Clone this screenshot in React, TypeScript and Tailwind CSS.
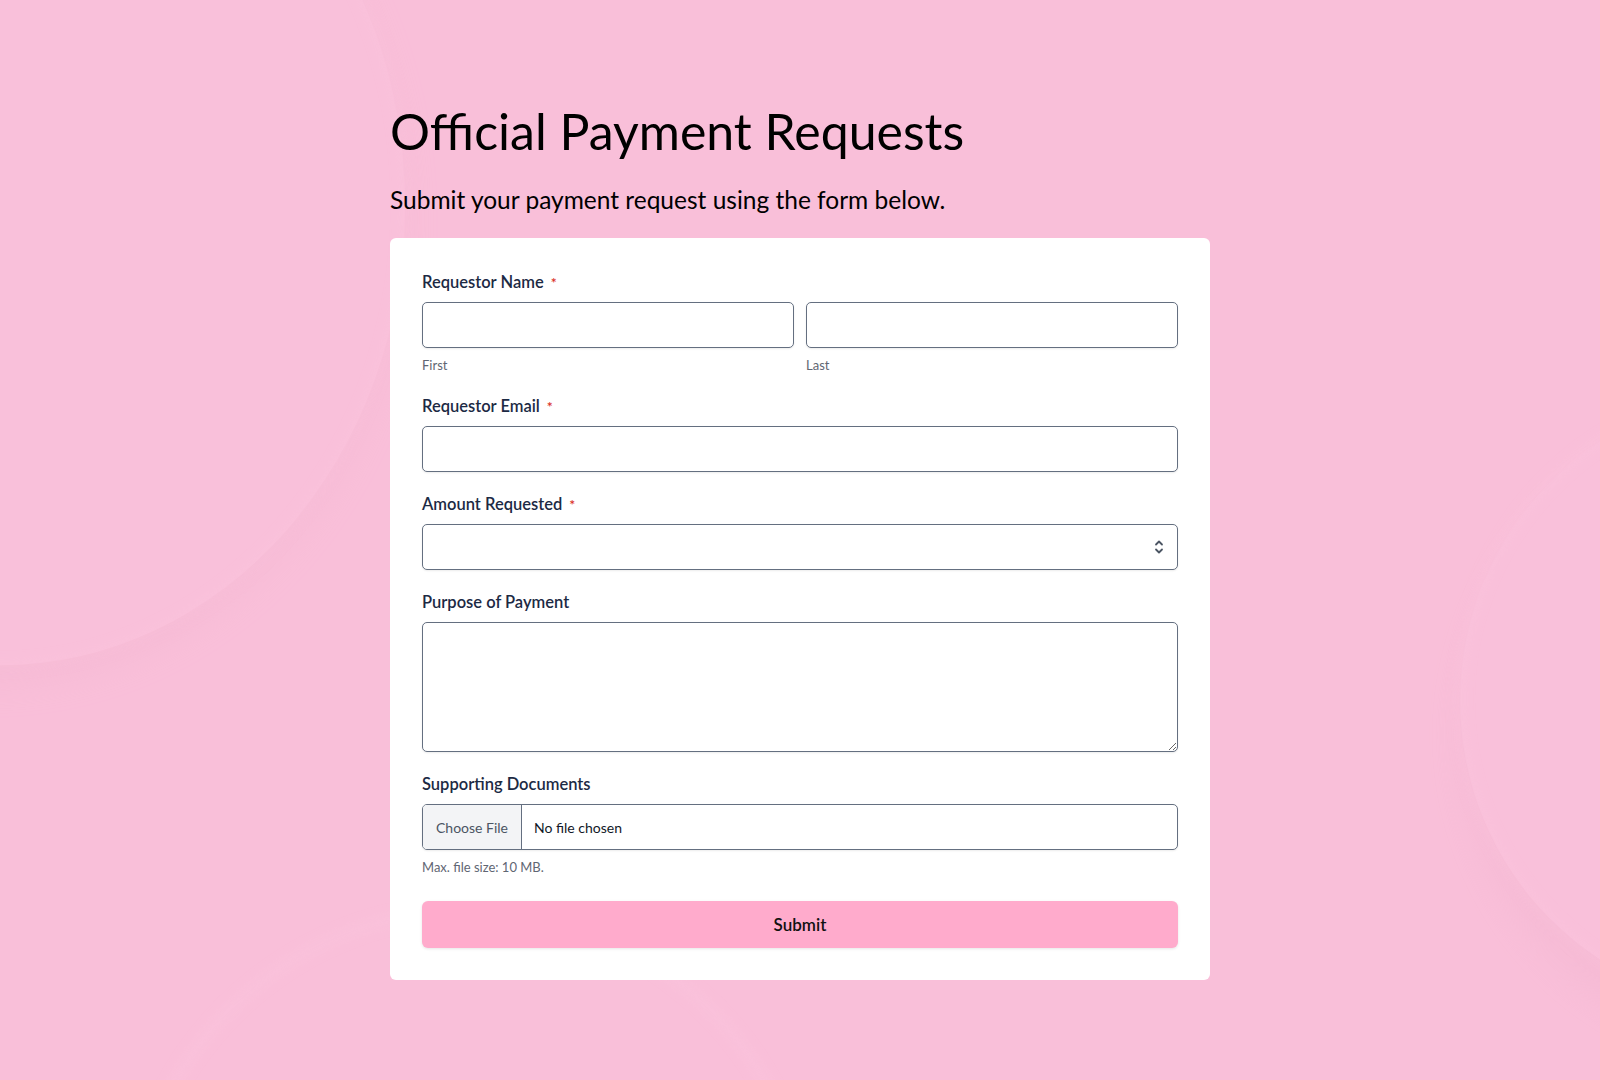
import React from "react";

const FONT = { fontFamily: "Lato, 'Noto Sans', sans-serif" };

const Label = ({ text, required }: { text: string; required?: boolean }) => (
  <label className="mb-2 flex items-center text-[16.5px] leading-6 font-semibold text-[#1c2a44]">
    {text}
    {required && (
      <span className="ml-[7px] translate-y-[1px] text-[14px] leading-none text-[#d93025]">*</span>
    )}
  </label>
);

const inputCls =
  "block h-[46px] w-full rounded-[5px] border border-[#646f80] bg-white px-3 text-[15px] text-[#1c2a44] shadow-[0_1px_2px_rgba(0,0,0,0.08)] outline-none";

const Backdrop = () => (
  <svg
    className="pointer-events-none absolute inset-0 h-full w-full"
    viewBox="0 0 1600 1080"
    preserveAspectRatio="none"
  >
    <defs>
      <filter id="soft" x="-20%" y="-20%" width="140%" height="140%">
        <feGaussianBlur stdDeviation="18" />
      </filter>
      <filter id="glow" x="-20%" y="-20%" width="140%" height="140%">
        <feGaussianBlur stdDeviation="6" />
      </filter>
    </defs>
    {/* top left blob */}
    <ellipse cx="-10" cy="218" rx="410" ry="462" fill="#eeb0cb" opacity="0.35" filter="url(#soft)" />
    <ellipse cx="0" cy="205" rx="405" ry="460" fill="#f9c0da" />
    <ellipse cx="0" cy="205" rx="405" ry="460" fill="none" stroke="#fbc6de" strokeWidth="4" opacity="0.5" filter="url(#glow)" />
    {/* right blob */}
    <circle cx="1780" cy="735" r="318" fill="#eeb0cb" opacity="0.3" filter="url(#soft)" />
    <circle cx="1770" cy="700" r="310" fill="#f9c0da" />
    <circle cx="1770" cy="700" r="310" fill="none" stroke="#fbc6de" strokeWidth="5" opacity="0.5" filter="url(#glow)" />
    {/* bottom blob */}
    <circle cx="470" cy="1250" r="340" fill="none" stroke="#fbc6de" strokeWidth="8" opacity="0.5" filter="url(#glow)" />
  </svg>
);

const App = () => {
  return (
    <div className="relative min-h-screen overflow-hidden bg-[#f9bfd9]" style={FONT}>
      <Backdrop />
      <main className="relative mx-auto w-[820px] pt-[101px] pb-[100px]">
        <h1 className="text-[50px] leading-[1.2] font-normal text-black">
          Official Payment Requests
        </h1>
        <p className="mt-[24px] text-[24.5px] leading-[1.2] text-black">
          Submit your payment request using the form below.
        </p>

        <form className="mt-[24px] rounded-md bg-white px-8 pt-8 pb-8">
          {/* Requestor Name */}
          <div>
            <Label text="Requestor Name" required />
            <div className="grid grid-cols-2 gap-3">
              <div>
                <input className={inputCls} type="text" />
                <div className="mt-[9px] text-[13px] leading-4 text-[#5f6673]">First</div>
              </div>
              <div>
                <input className={inputCls} type="text" />
                <div className="mt-[9px] text-[13px] leading-4 text-[#5f6673]">Last</div>
              </div>
            </div>
          </div>

          {/* Email */}
          <div className="mt-[21px]">
            <Label text="Requestor Email" required />
            <input className={inputCls} type="email" />
          </div>

          {/* Amount */}
          <div className="mt-5">
            <Label text="Amount Requested" required />
            <div className="relative">
              <select className={inputCls + " appearance-none"} defaultValue="">
                <option value=""></option>
              </select>
              <svg
                className="pointer-events-none absolute top-1/2 right-[14px] h-[16px] w-[10px] -translate-y-1/2"
                viewBox="0 0 10 16"
                fill="none"
                stroke="#4b5563"
                strokeWidth="1.8"
                strokeLinecap="round"
                strokeLinejoin="round"
              >
                <path d="M2 5.5 5 2.5 8 5.5" />
                <path d="M2 10.5 5 13.5 8 10.5" />
              </svg>
            </div>
          </div>

          {/* Purpose */}
          <div className="mt-5">
            <Label text="Purpose of Payment" />
            <textarea
              className="block h-[130px] w-full rounded-[5px] border border-[#646f80] bg-white px-3 py-2 text-[15px] shadow-[0_1px_2px_rgba(0,0,0,0.08)] outline-none"
            />
          </div>

          {/* Supporting docs */}
          <div className="mt-5">
            <Label text="Supporting Documents" />
            <div className="flex h-[46px] w-full overflow-hidden rounded-[5px] border border-[#646f80] bg-white shadow-[0_1px_2px_rgba(0,0,0,0.08)]">
              <div className="flex w-[99px] items-center justify-center border-r border-[#646f80] bg-[#f3f4f6] text-[14px] text-[#4b5563]">
                Choose File
              </div>
              <div className="flex items-center pl-3 text-[14px] text-[#111827]">No file chosen</div>
            </div>
            <div className="mt-[9px] text-[13px] leading-4 text-[#5f6673]">Max. file size: 10 MB.</div>
          </div>

          <button
            type="button"
            className="mt-[26px] block h-[47px] w-full rounded-md bg-[#ffabcc] text-[17px] font-semibold text-[#111] shadow-[0_1px_3px_rgba(0,0,0,0.1)]"
          >
            Submit
          </button>
        </form>
      </main>
    </div>
  );
};

export default App;
